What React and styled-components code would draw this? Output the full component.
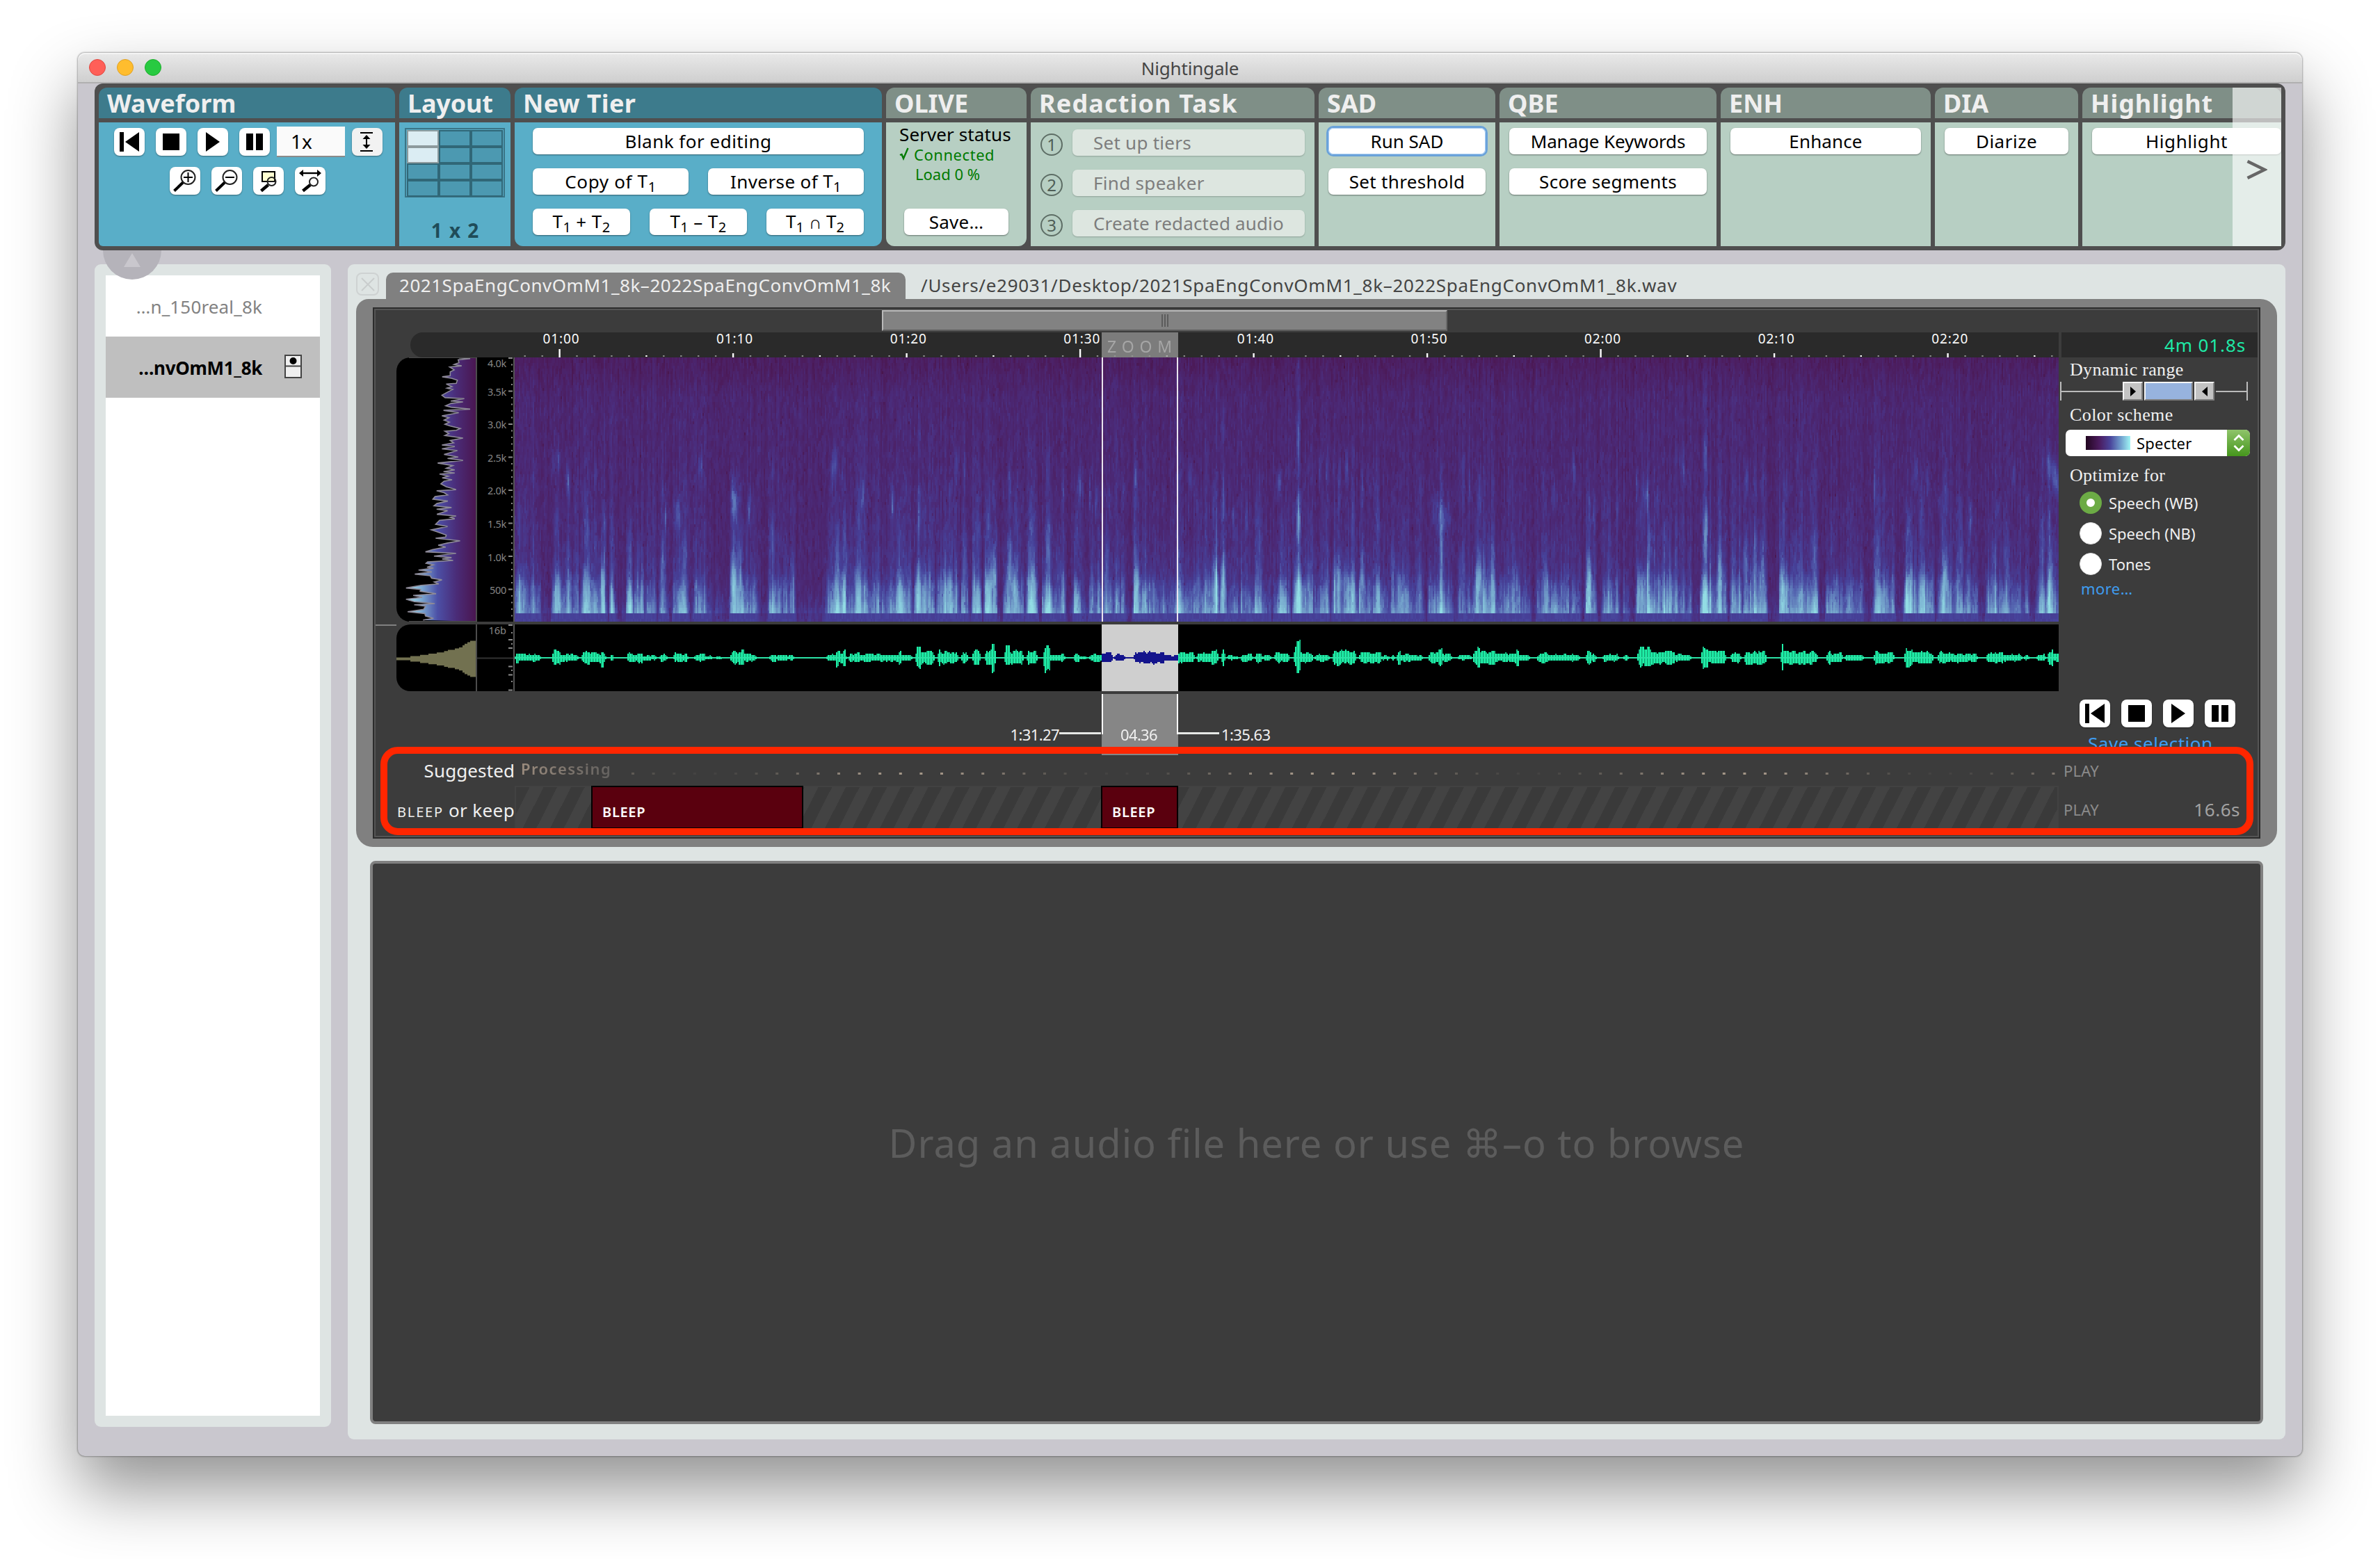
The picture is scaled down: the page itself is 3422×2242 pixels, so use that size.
import React, { useEffect, useRef } from "react";
import styled, { createGlobalStyle, css } from "styled-components";

const Global = createGlobalStyle`
  *, *::before, *::after { box-sizing: border-box; }
  html, body { margin: 0; padding: 0; background: #fff; }
  body { font-family: "Noto Sans", "Open Sans", sans-serif; font-size: 26px; color: #000; overflow: hidden; }
  button { font: inherit; color: inherit; }
`;

/* ---------- shell ---------- */

const Desktop = styled.div`
  width: 3422px;
  height: 2242px;
  padding: 76px 112px 0;
  background: #fff;
  overflow: hidden;
`;

const Window = styled.div`
  width: 3198px;
  height: 2018px;
  display: flex;
  flex-direction: column;
  border-radius: 10px;
  background: #c9c7ce;
  box-shadow: 0 0 2px 1px rgba(0, 0, 0, 0.3), 0 48px 96px rgba(0, 0, 0, 0.43);
`;

const TitleBar = styled.header`
  flex: none;
  height: 44px;
  display: grid;
  grid-template-columns: 1fr auto 1fr;
  align-items: center;
  padding: 0 16px;
  border-radius: 10px 10px 0 0;
  border-bottom: 2px solid #b0b0b0;
  background: linear-gradient(#e9e9e9, #cfcfcf);
  box-shadow: inset 0 2px 0 #f4f4f4;
  color: #464646;
`;

const Lights = styled.div`
  display: flex;
  gap: 16px;
`;

const Light = styled.span`
  width: 24px;
  height: 24px;
  border-radius: 50%;
  background: ${(p) => p.$fill};
  border: 1px solid ${(p) => p.$edge};
`;

const Title = styled.div`
  padding-top: 2px;
  letter-spacing: -0.007em;
`;

/* ---------- toolbar ---------- */

const ToolbarWrap = styled.div`
  position: relative;
  flex: none;
  margin: 0 24px;
`;

const Toolbar = styled.div`
  position: relative;
  z-index: 1;
  height: 240px;
  display: flex;
  gap: 6px;
  padding: 6px;
  border-radius: 12px;
  background: #4f4f4f;
`;

const CollapseHandle = styled.div`
  position: absolute;
  z-index: 2;
  left: 12px;
  top: 240px;
  width: 84px;
  height: 42px;
  border-radius: 0 0 42px 42px;
  background: #b5b3ba;
  display: flex;
  justify-content: center;
  padding-top: 4px;
`;

const Group = styled.section`
  flex: none;
  width: ${(p) => p.$w}px;
  display: flex;
  flex-direction: column;
  gap: 6px;
`;

const GroupTitle = styled.h2`
  margin: 0;
  height: 44px;
  padding: 2px 0 0 12px;
  display: flex;
  align-items: center;
  border-radius: 12px 12px 0 0;
  background: ${(p) => (p.$green ? "#7f8f87" : "#3d7b8c")};
  color: #efefef;
  font-size: 36px;
  line-height: 42px;
  font-weight: 700;
  letter-spacing: ${(p) => p.$ls || 0}em;
  white-space: nowrap;
`;

const GroupBody = styled.div`
  flex: 1;
  min-height: 0;
  display: flex;
  flex-direction: column;
  gap: ${(p) => (p.$gap === undefined ? 20 : p.$gap)}px;
  padding: ${(p) => p.$pad || "8px 14px"};
  border-radius: ${(p) => p.$radius || 0};
  background: ${(p) => (p.$green ? "#b7cfc3" : "#59aec8")};
`;

const ButtonRow = styled.div`
  display: flex;
  gap: 28px;
  align-items: center;
`;

const Button = styled.button`
  flex: ${(p) => (p.$w ? "none" : 1)};
  width: ${(p) => (p.$w ? `${p.$w}px` : "auto")};
  height: 38px;
  padding: 0;
  display: flex;
  justify-content: center;
  align-items: center;
  border: 0;
  border-radius: 7px;
  background: #fff;
  box-shadow: 0 1px 2px rgba(0, 0, 0, 0.45);
  font-size: 26px;
  line-height: 36px;
  letter-spacing: ${(p) => p.$ls || 0}em;
  white-space: pre;
  ${(p) => p.$focus && css`
    box-shadow: 0 0 0 3px #6aa2da, inset 0 0 0 1px #a9cdf2;
  `}
  ${(p) => p.$off && css`
    justify-content: flex-start;
    padding-left: 30px;
    background: #dde6e0;
    color: #7d7d7d;
    box-shadow: 0 1px 2px rgba(0, 0, 0, 0.22);
  `}
`;

const Sub = styled.span`
  font-size: 20px;
  position: relative;
  top: 6px;
`;

const IconButton = styled.button`
  width: 44px;
  height: 40px;
  padding: 0;
  border: 0;
  border-radius: 8px;
  background: ${(p) => p.$bg || "#fff"};
  box-shadow: 0 1px 2px rgba(0, 0, 0, 0.4);
  display: flex;
  svg { display: block; }
`;

const Transport = styled.div`
  display: flex;
  align-items: center;
  gap: 16px;
  margin: ${(p) => p.$top || 0}px 0 0 ${(p) => p.$left || 0}px;
`;

const SpeedBox = styled.div`
  width: 98px;
  height: 44px;
  margin: -2px -6px;
  padding-left: 20px;
  display: flex;
  align-items: center;
  background: #fafafa;
  border-bottom: 2px solid #8a8a8a;
  font-size: 28px;
  line-height: 40px;
`;

const LayoutGrid = styled.div`
  width: 144px;
  height: 100px;
  padding: 1px;
  border: 2px solid #3a7486;
  display: grid;
  grid-template-columns: repeat(3, 46px);
  grid-template-rows: repeat(4, 24px);
`;

const LayoutCell = styled.span`
  border: 2px solid ${(p) => (p.$on ? "#8c9a9d" : "#306777")};
  background: ${(p) => (p.$on ? "#dbedf3" : "#4c99b1")};
`;

const LayoutLabel = styled.div`
  margin-top: 27px;
  text-align: center;
  font-size: 28px;
  line-height: 40px;
  font-weight: 700;
  word-spacing: 0.1em;
  color: #1f4c59;
`;

const StatusTitle = styled.div`
  font-size: 26px;
  line-height: 30px;
  padding-left: 13px;
  letter-spacing: 0.004em;
  white-space: nowrap;
`;

const StatusLine = styled.div`
  display: flex;
  align-items: center;
  gap: 6px;
  height: 28px;
  padding-left: ${(p) => p.$left}px;
  font-size: 22px;
  letter-spacing: ${(p) => p.$ls}em;
  color: #007a00;
  white-space: nowrap;
`;

const StatusAction = styled.div`
  margin: 36px 0 0 20px;
  display: flex;
`;

const ScrollHint = styled.div`
  position: absolute;
  right: 6px;
  top: 6px;
  width: 70px;
  height: 228px;
  padding-top: 8px;
  background: rgba(255, 255, 255, 0.63);
  display: flex;
  align-items: center;
  justify-content: center;
`;

const StepRow = styled.div`
  height: 38px;
  display: flex;
  align-items: center;
  gap: 14px;
  svg { flex: none; margin-top: 6px; }
`;

/* ---------- body ---------- */

const Body = styled.main`
  flex: 1;
  min-height: 0;
  display: flex;
  align-items: flex-start;
  gap: 24px;
  padding: 20px 24px 0;
`;

const Sidebar = styled.aside`
  flex: none;
  width: 340px;
  height: 1672px;
  padding: 16px;
  border-radius: 9px;
  background: #dee4e3;
`;

const FileList = styled.ul`
  height: 100%;
  margin: 0;
  padding: 0;
  list-style: none;
  background: #fff;
`;

const FileItem = styled.li`
  height: 88px;
  padding: 2px 26px 0 0;
  display: grid;
  grid-template-columns: 225px 1fr;
  align-items: center;
  text-align: right;
  background: ${(p) => (p.$active ? "#bfbfbf" : "#fff")};
  color: ${(p) => (p.$active ? "#000" : "#828282")};
  font-weight: ${(p) => (p.$active ? 700 : 400)};
  letter-spacing: ${(p) => (p.$active ? -0.012 : 0.006)}em;
  svg { justify-self: end; margin-top: -4px; }
`;

const Workspace = styled.div`
  flex: 1;
  height: 1690px;
  padding: 12px 12px 0;
  border-radius: 9px;
  background: #dee4e3;
`;

const TabBar = styled.div`
  height: 38px;
  display: flex;
  align-items: flex-start;
`;

const CloseTab = styled.span`
  width: 33px;
  height: 33px;
  border: 2px solid #ced2d2;
  border-radius: 8px;
  display: flex;
  align-items: center;
  justify-content: center;
`;

const Tab = styled.div`
  width: 747px;
  height: 38px;
  margin-left: 10px;
  padding-left: 19px;
  border-radius: 10px 10px 0 0;
  background: #808080;
  color: #efefef;
  line-height: 36px;
  letter-spacing: 0.0205em;
  white-space: nowrap;
`;

const FilePath = styled.div`
  margin-left: 22px;
  line-height: 36px;
  letter-spacing: 0.0277em;
  color: #444;
  white-space: nowrap;
`;

const AudioFrame = styled.section`
  width: 2762px;
  height: 788px;
  padding: 12px 24px;
  border-radius: 24px;
  border-top-left-radius: 18px;
  background: #808080;
`;

const AudioPane = styled.div`
  position: relative;
  height: 764px;
  border: 2px solid #2c2c2c;
  background: #3c3c3c;
  box-shadow: inset 0 0 0 2px #555;
`;

const OverviewTrack = styled.div`
  height: 34px;
  padding: 2px 0 0 730px;
`;

const OverviewThumb = styled.div`
  width: 813px;
  height: 30px;
  display: flex;
  justify-content: center;
  align-items: center;
  gap: 2px;
  border: 2px solid;
  border-color: #b9b9b9 #6a6a6a #5c5c5c #b9b9b9;
  background: #828282;
`;

const Grip = styled.i`
  width: 2px;
  height: 18px;
  background: #5c5c5c;
`;

const Plots = styled.div`
  height: 600px;
  display: grid;
  grid-template-columns: 2422px 284px;
  column-gap: 2px;
`;

const PlotColumn = styled.div`
  position: relative;
  display: flex;
  flex-direction: column;
`;

const Ruler = styled.div`
  height: 36px;
  margin-left: 52px;
  border-radius: 18px 0 0 18px;
  background: #2a2a2a;
  svg { display: block; overflow: visible; }
`;

const PlotRow = styled.div`
  height: ${(p) => p.$h}px;
  margin: 0 0 4px 32px;
  display: flex;
  border-radius: 20px 0 0 20px;
  background: #000;
  svg, canvas { display: block; flex: none; overflow: visible; }
`;

const SpectrumCanvas = styled.canvas`
  width: 2220px;
  height: 380px;
  image-rendering: pixelated;
`;

const Selection = styled.div`
  position: absolute;
  z-index: 1;
  left: 1046px;
  top: 0;
  width: 110px;
  display: flex;
  flex-direction: column;
`;

const ZoomLabel = styled.div`
  height: 36px;
  padding: 6px 0 0 8px;
  background: rgba(150, 150, 150, 0.76);
  color: #a6a6a6;
  font-size: 23px;
  line-height: 28px;
  letter-spacing: 0.34em;
  white-space: nowrap;
`;

const SelectionEdges = styled.div`
  height: 380px;
  border: solid #e9e4ee;
  border-width: 0 2px;
`;

const SelectionFoot = styled.div`
  height: 88px;
  margin-top: 104px;
  padding: 43px 3px 0 0;
  background: #868686;
  border: solid transparent;
  border-width: 0 2px;
  border-image: linear-gradient(#fff 58px, #868686 58px) 1;
  text-align: center;
  font-size: 22px;
  line-height: 30px;
  letter-spacing: -0.03em;
  color: #f0f0f0;
`;

const Bounds = styled.div`
  position: absolute;
  left: 0;
  top: 563px;
  width: 1420px;
  height: 30px;
  display: flex;
  align-items: center;
  font-size: 22px;
  letter-spacing: -0.027em;
  color: #f0f0f0;
`;

const BoundStart = styled.span`
  width: 985px;
  text-align: right;
`;

const BoundEnd = styled.span`
  padding-left: 3px;
`;

const Leader = styled.i`
  width: 60px;
  height: 3px;
  margin: -4px ${(p) => p.$gap || 0}px 0 0;
  background: #e6e8e6;
`;

/* ---------- settings column ---------- */

const Settings = styled.div`
  height: 600px;
  padding-left: 2px;
  overflow: hidden;
`;

const Duration = styled.div`
  height: 36px;
  padding-right: 17px;
  background: #2a2a2a;
  color: #1fe9a6;
  text-align: right;
  line-height: 36px;
  letter-spacing: 0.034em;
`;

const SerifLabel = styled.div`
  height: 34px;
  margin-top: ${(p) => p.$top}px;
  padding-left: 12px;
  font-family: "Liberation Serif", "Times New Roman", serif;
  font-size: 26px;
  line-height: 34px;
  letter-spacing: ${(p) => p.$ls || 0}em;
  color: #f0f0f0;
`;

const RangeSlider = styled.div`
  height: 27px;
  width: 272px;
  margin-left: -2px;
  display: flex;
  align-items: center;
`;

const Rail = styled.i`
  width: ${(p) => p.$w}px;
  height: 100%;
  border: 0 solid #bbb;
  border-left-width: ${(p) => (p.$start ? 2 : 0)}px;
  border-right-width: ${(p) => (p.$end ? 2 : 0)}px;
  background: linear-gradient(#bbb, #bbb) center / 100% 2px no-repeat;
`;

const Knob = styled.i`
  width: ${(p) => (p.$range ? 70 : 29)}px;
  height: 27px;
  margin-right: 2px;
  display: flex;
  justify-content: center;
  align-items: center;
  border: 2px solid;
  border-color: #f4f4f4 #7f7f7f #7f7f7f #f4f4f4;
  background: ${(p) => (p.$range ? "#97b3de" : "#c3c3c3")};
`;

const Combo = styled.div`
  width: 265px;
  height: 38px;
  margin: 4px 0 0 6px;
  display: flex;
  align-items: center;
  border-radius: 7px;
  background: #fff;
  overflow: hidden;
  font-size: 22px;
  line-height: 36px;
  letter-spacing: 0.01em;
`;

const Swatch = styled.i`
  width: 64px;
  height: 20px;
  margin: 0 9px 0 29px;
  background: linear-gradient(90deg, #22061f, #4b1b5e 30%, #4a459b 55%, #6f9ccc 78%, #9ff5f5);
`;

const ComboArrows = styled.span`
  margin-left: auto;
  width: 33px;
  height: 38px;
  background: linear-gradient(#8fc46a, #45961c);
  display: flex;
  align-items: center;
  justify-content: center;
`;

const Radio = styled.div`
  height: 44px;
  padding-left: 26px;
  display: flex;
  align-items: center;
  gap: 10px;
  font-size: 22px;
  color: #f0f0f0;
  white-space: nowrap;
`;

const Dot = styled.i`
  width: 32px;
  height: 32px;
  border-radius: 50%;
  border: ${(p) => (p.$on ? "10.5px solid #6cab45" : "1px solid #ddd")};
  background: #fff;
`;

const LinkText = styled.div`
  margin: ${(p) => p.$m};
  font-size: ${(p) => p.$size}px;
  line-height: 30px;
  letter-spacing: 0.02em;
  color: #3f9cf0;
  white-space: nowrap;
`;

/* ---------- tiers ---------- */

const Tier = styled.div`
  height: ${(p) => p.$h}px;
  display: grid;
  grid-template-columns: 202px 2220px 1fr;
`;

const TierName = styled.div`
  padding-top: ${(p) => p.$top}px;
  text-align: right;
  line-height: 36px;
  letter-spacing: ${(p) => p.$ls || 0}em;
  color: #f0f0f0;
  white-space: nowrap;
  small { font-size: 20px; letter-spacing: 0.09em; }
`;

const ProcessingLane = styled.div`
  display: flex;
  align-items: flex-start;
  padding: 9px 0 0 9px;
  svg { display: block; flex: none; margin-top: 24px; }
`;

const ProcessingText = styled.span`
  width: 160px;
  font-size: 22px;
  line-height: 36px;
  font-weight: 600;
  letter-spacing: 0.065em;
  background: linear-gradient(90deg, #9a8b7d, #62605e 132px);
  background-clip: text;
  -webkit-background-clip: text;
  color: transparent;
`;

const HatchLane = styled.div`
  display: flex;
  height: 62px;
  border: 2px solid #424242;
  border-width: 2px 2px 0;
  background: repeating-linear-gradient(117deg, #3a3a3a 0 17.6px, #434343 17.6px 35.2px);
`;

const Bleep = styled.div`
  flex: none;
  width: ${(p) => p.$w}px;
  height: 62px;
  margin: -2px 0 0 ${(p) => p.$left}px;
  padding: 18px 0 0 14px;
  border: 2px solid #000;
  background: #5a000e;
  color: #fff;
  font-size: 20px;
  line-height: 36px;
  font-weight: 600;
  letter-spacing: 0.035em;
`;

const TierTail = styled.div`
  padding: ${(p) => p.$top}px 27px 0 7px;
  display: flex;
  justify-content: space-between;
  line-height: 36px;
  color: #a3a3a3;
  letter-spacing: 0.02em;
  small { font-size: 22px; color: #8b8b8b; letter-spacing: 0.01em; }
`;

const Callout = styled.div`
  position: absolute;
  z-index: 3;
  left: 9px;
  top: 630px;
  width: 2693px;
  height: 127px;
  border: 10px solid #ff2600;
  border-radius: 25px;
`;

const DropZone = styled.section`
  width: 2722px;
  height: 810px;
  margin: 20px 0 0 20px;
  display: flex;
  align-items: center;
  justify-content: center;
  border: 4px solid #808080;
  border-radius: 8px;
  background: #3c3c3c;
  color: #5c5c5c;
  font-size: 56px;
  letter-spacing: 0.0175em;
  white-space: nowrap;
`;

/* ---------- signal data ---------- */

const BURSTS = [
  [740, 743, 2], [743, 747, 8.5], [747, 779, 5.5], [795, 806, 11], [806, 832, 6], [836, 848, 10], [848, 865, 7], [865, 868, 13],
  [868, 873, 6], [878, 883, 10], [902, 905, 12], [905, 925, 7], [925, 944, 4], [948, 960, 5], [968, 973, 9], [973, 990, 6],
  [998, 1015, 6], [1015, 1024, 3], [1028, 1040, 1.5], [1050, 1062, 9], [1062, 1071, 11], [1071, 1088, 5.5], [1107, 1116, 6],
  [1116, 1119, 2], [1119, 1132, 5], [1132, 1136, 3], [1136, 1143, 5], [1189, 1203, 5], [1203, 1206, 13], [1206, 1213, 9],
  [1213, 1216, 13], [1216, 1219, 4], [1220, 1228, 7], [1228, 1236, 8], [1236, 1269, 6], [1269, 1292, 5], [1292, 1296, 9],
  [1296, 1312, 5], [1317, 1325, 16], [1325, 1345, 9], [1348, 1353, 15], [1353, 1378, 9], [1383, 1393, 8], [1399, 1410, 12],
  [1417, 1427, 12], [1427, 1432, 23], [1445, 1453, 17], [1453, 1473, 10], [1477, 1492, 9], [1500, 1510, 21], [1510, 1532, 5],
  [1544, 1552, 7], [1552, 1562, 3], [1567, 1585, 6], [1585, 1600, 8], [1603, 1618, 5], [1631, 1675, 8.5], [1675, 1694, 4],
  [1694, 1718, 8], [1720, 1742, 7], [1742, 1753, 12], [1756, 1763, 14], [1764, 1781, 3], [1784, 1802, 6], [1805, 1815, 8],
  [1815, 1828, 3], [1833, 1855, 7], [1860, 1865, 15], [1865, 1870, 25], [1870, 1889, 8], [1891, 1912, 6], [1917, 1930, 12],
  [1930, 1950, 10], [1954, 1986, 8], [1986, 1998, 3], [2000, 2007, 5], [2009, 2015, 13], [2015, 2029, 6], [2029, 2047, 4],
  [2055, 2069, 8], [2069, 2075, 14], [2075, 2089, 6], [2096, 2116, 4], [2119, 2125, 13], [2125, 2128, 18], [2128, 2150, 10],
  [2151, 2180, 7], [2181, 2184, 13], [2184, 2200, 4], [2211, 2227, 8], [2227, 2272, 5], [2281, 2288, 10], [2288, 2297, 5],
  [2304, 2328, 5], [2334, 2343, 4], [2354, 2369, 14], [2369, 2374, 16], [2374, 2408, 10], [2408, 2432, 5], [2446, 2457, 17],
  [2457, 2482, 10], [2489, 2504, 8], [2508, 2540, 10], [2561, 2565, 19], [2565, 2583, 10], [2583, 2615, 9], [2626, 2633, 10],
  [2633, 2650, 7], [2652, 2681, 5], [2695, 2710, 9], [2710, 2725, 8], [2739, 2751, 14], [2751, 2781, 9], [2787, 2804, 9],
  [2804, 2845, 7], [2856, 2880, 8], [2880, 2908, 5], [2910, 2918, 4], [2929, 2943, 5], [2945, 2952, 12], [2952, 2960, 6],
];

/* x position, reach above the floor (0..1) and strength of the tall bright streaks */
const STREAKS = [
  [746, 0.55, 0.3], [755, 0.45, 0.25], [801, 0.4, 0.5], [817, 0.3, 0.3], [843, 0.62, 0.3], [856, 0.5, 0.3], [867, 0.35, 0.45],
  [881, 0.3, 0.35], [905, 0.3, 0.55], [920, 0.28, 0.3], [953, 0.7, 0.35], [985, 0.6, 0.3], [1054, 0.6, 0.5], [1065, 0.45, 0.5],
  [1085, 0.5, 0.25], [1111, 0.62, 0.45], [1139, 0.38, 0.3], [1204, 0.35, 0.4], [1215, 0.4, 0.45], [1234, 0.55, 0.3],
  [1295, 0.3, 0.4], [1321, 0.85, 0.5], [1330, 0.5, 0.3], [1364, 0.4, 0.35], [1387, 0.7, 0.35], [1406, 0.55, 0.45],
  [1421, 0.5, 0.3], [1429, 0.55, 0.5], [1452, 0.6, 0.55], [1460, 0.6, 0.4], [1482, 0.5, 0.3], [1507, 0.6, 0.6], [1522, 0.4, 0.3],
  [1548, 0.45, 0.45], [1591, 0.45, 0.35], [1634, 0.3, 0.3], [1695, 0.3, 0.35], [1746, 0.65, 0.45], [1759, 0.8, 0.5],
  [1777, 0.4, 0.25], [1810, 0.5, 0.35], [1843, 0.4, 0.4], [1867, 0.95, 0.75], [1881, 0.4, 0.3], [1925, 0.6, 0.4],
  [1945, 0.5, 0.35], [1958, 0.75, 0.4], [1981, 0.6, 0.35], [2003, 0.35, 0.35], [2018, 0.4, 0.3], [2042, 0.85, 0.2],
  [2072, 0.55, 0.5], [2103, 0.6, 0.3], [2127, 0.6, 0.55], [2145, 0.35, 0.35], [2220, 0.6, 0.2], [2236, 0.3, 0.3], [2285, 0.45, 0.5],
  [2359, 0.7, 0.3], [2372, 0.4, 0.5], [2396, 0.35, 0.35], [2452, 0.85, 0.65], [2473, 0.45, 0.4], [2510, 0.5, 0.45],
  [2524, 0.5, 0.35], [2534, 0.6, 0.45], [2565, 0.4, 0.45], [2581, 0.35, 0.3], [2608, 0.6, 0.4], [2634, 0.35, 0.3],
  [2697, 0.8, 0.25], [2708, 0.55, 0.25], [2743, 0.45, 0.5], [2763, 0.55, 0.35], [2798, 0.65, 0.45], [2820, 0.4, 0.35],
  [2866, 0.3, 0.35], [2884, 0.4, 0.3], [2937, 0.6, 0.35], [2948, 0.4, 0.5],
];

const COLUMNS = 1110;
const ROWS = 95;

const rand = (a, b = 0) => {
  const s = Math.sin(a * 127.1 + b * 311.7) * 43758.5453;
  return s - Math.floor(s);
};

const smooth = (x, seed) => {
  const i = Math.floor(x);
  const t = x - i;
  const k = t * t * (3 - 2 * t);
  return rand(i, seed) * (1 - k) + rand(i + 1, seed) * k;
};

const ENVELOPE = Array.from({ length: COLUMNS }, (_, i) => {
  const x = 740 + i * 2 + 1;
  const hit = BURSTS.find(([a, b]) => x >= a && x < b);
  return hit ? hit[2] : 0;
});

const RAMP = [
  [0, 70, 16, 62], [0.16, 76, 28, 92], [0.32, 75, 42, 120], [0.48, 70, 64, 152],
  [0.62, 84, 100, 176], [0.8, 112, 156, 200], [1, 146, 220, 228],
];

const shade = (v) => {
  const c = Math.max(0, Math.min(1, v));
  for (let i = 1; i < RAMP.length; i += 1) {
    if (c <= RAMP[i][0]) {
      const [a, ...p] = RAMP[i - 1];
      const [b, ...q] = RAMP[i];
      const t = (c - a) / (b - a);
      return p.map((n, k) => n + (q[k] - n) * t);
    }
  }
  return RAMP[RAMP.length - 1].slice(1);
};

function Spectrogram() {
  const ref = useRef(null);
  useEffect(() => {
    const ctx = ref.current.getContext("2d");
    const img = ctx.createImageData(COLUMNS, ROWS);
    for (let x = 0; x < COLUMNS; x += 1) {
      const px = 741 + x * 2;
      const near = (ENVELOPE[x] * 2 + (ENVELOPE[x - 1] || 0) + (ENVELOPE[x + 1] || 0)) / 4;
      const s = Math.min(1, near / 14);
      const voiced = Math.min(1, near / 5);
      const streak = Math.pow(smooth(x / 1.6, 5), 3);
      const reach = 0.12 + 0.3 * s * smooth(x / 4, 9);
      const cut = 0.1 + 0.05 * s + 0.06 * smooth(x / 2, 3);
      const colNoise = (rand(x, 77) - 0.5) * 0.07;
      const formant = 0.36 + 0.26 * smooth(x / 11, 21);
      const fAmp = voiced * Math.pow(smooth(x / 2.4, 31), 5) * 0.32;
      const near2 = STREAKS.filter(([c]) => Math.abs(c - px) < 12);
      for (let y = 0; y < ROWS; y += 1) {
        const h = 1 - y / ROWS;
        let v = 0.27 - 0.1 * Math.max(0, h - 0.85) * 6 + colNoise;
        v += (rand(x, Math.floor((y + (x % 3)) / 3) + 200) - 0.5) * 0.1;
        if (rand(x, y + 900) > 0.995) v -= 0.1;
        v += 0.05 * Math.exp(-h / 0.25);
        v += 0.13 / (1 + Math.exp((h - 0.06) / 0.02));
        v += voiced * (0.13 + 0.13 * s + 0.1 * (rand(x, 41) - 0.5) + 0.1 * (smooth(x / 3, 43) - 0.5)) / (1 + Math.exp((h - cut) / 0.02));
        v += voiced * (0.08 + 0.24 * s) * streak * Math.exp(-Math.pow(h / reach, 1.6));
        v += voiced * 0.08 * Math.exp(-Math.pow(h / 0.4, 2));
        v += voiced * 0.12 * Math.pow(streak, 0.7) * (1 - h * 0.75);
        v += fAmp * Math.exp(-Math.pow((h - formant) / 0.06, 2));
        near2.forEach(([c, tall, power], k) => {
          const d = Math.abs(px - c + (h - 0.2) * 5 * (rand(c, 8) - 0.5));
          const fall = h < tall ? 1 - 0.65 * (h / tall) : 0.35 * Math.exp(-(h - tall) / 0.08);
          const band = 0.65 + 0.35 * Math.cos(h * 21 + rand(c, k) * 6);
          v += power * 0.75 * fall * band * Math.exp(-Math.pow(d / (5 - 2.6 * Math.min(1, h / 0.5)), 2));
        });
        if (h < 0.04) v = Math.min(v, 0.55) - 0.07;
        v += (rand(x, Math.floor(y / 2) + 400) - 0.5) * 0.05;
        const [r, g, b] = shade(v > 0.8 ? 0.8 + (v - 0.8) * 0.6 : v);
        const o = (y * COLUMNS + x) * 4;
        img.data[o] = r;
        img.data[o + 1] = g;
        img.data[o + 2] = b;
        img.data[o + 3] = 255;
      }
    }
    ctx.putImageData(img, 0, 0);
  }, []);
  return <SpectrumCanvas ref={ref} width={COLUMNS} height={ROWS} />;
}

const wavePath = () => {
  const mid = 48;
  let top = `M0 ${mid}`;
  let bottom = "";
  ENVELOPE.forEach((a, i) => {
    const edge = ENVELOPE[i - 1] === 0 || ENVELOPE[i + 1] === 0 ? 0.5 : 1;
    const up = Math.max(1, Math.round((a * edge * (0.62 + 0.5 * smooth(i / 1.7, 61))) / 2) * 2);
    const down = Math.max(1, Math.round((a * edge * (0.6 + 0.5 * smooth(i / 1.7, 62))) / 2) * 2);
    top += `V${mid - up}H${(i + 1) * 2}`;
    bottom = `V${mid + down}H${i * 2}${bottom}`;
  });
  return `${top}${bottom}Z`;
};

const WAVE = wavePath();

function Waveform() {
  return (
    <svg width="2220" height="96" viewBox="0 0 2220 96">
      <defs>
        <pattern id="bars" width="4" height="96" patternUnits="userSpaceOnUse">
          <rect width="4" height="96" fill="#1ff0a8" />
          <rect width="1.4" height="96" fill="#12a473" />
        </pattern>
        <clipPath id="sel"><rect x="844" width="110" height="96" /></clipPath>
      </defs>
      <path d={WAVE} fill="url(#bars)" />
      <path d="M0 48H2220" stroke="#2be3a6" strokeWidth="2" />
      <g clipPath="url(#sel)">
        <rect x="844" width="110" height="96" fill="#cfcfcf" />
        <path d={WAVE} fill="#14148c" />
      </g>
    </svg>
  );
}

const PROFILE = [
  [102, 418], [105, 460], [110, 415], [122, 418], [130, 400], [135, 428], [140, 383], [152, 400], [160, 385], [176, 385], [181, 355],
  [187, 390], [195, 412], [208, 408], [211, 370], [222, 392], [228, 373], [234, 394], [245, 375], [258, 354], [268, 366], [272, 438],
  [282, 387], [286, 433], [292, 388], [302, 368], [308, 388], [316, 460], [321, 360], [331, 417], [344, 354], [352, 380], [362, 362],
  [370, 382], [379, 365], [386, 384], [397, 423], [404, 408], [408, 365], [418, 380], [426, 365], [437, 433], [447, 385], [457, 398],
  [466, 354], [472, 402], [482, 354], [489, 412], [505, 362], [516, 415], [522, 375], [530, 433], [541, 338], [552, 395], [563, 370],
  [570, 402], [577, 360], [583, 402], [587, 345], [596, 378], [603, 355], [611, 392], [617, 362], [628, 350], [640, 370], [652, 407],
  [657, 334], [665, 362], [674, 375], [681, 328], [692, 320], [700, 376], [710, 335], [720, 324], [727, 390], [734, 334], [740, 375],
  [755, 335], [762, 407], [768, 385], [774, 402], [780, 345], [797, 330], [806, 375], [820, 314], [832, 345], [842, 370], [850, 368],
  [855, 330], [866, 422], [875, 375], [884, 340], [892, 368], [902, 320], [912, 292], [918, 407], [930, 324], [936, 390], [942, 355],
  [948, 396], [954, 300], [960, 294], [966, 322], [976, 298], [980, 322], [988, 266], [996, 316], [1005, 252], [1012, 310],
  [1022, 315], [1029, 354], [1038, 325], [1046, 342], [1052, 275], [1063, 219], [1069, 274], [1077, 272], [1087, 332], [1094, 246],
  [1102, 280], [1110, 219], [1120, 250], [1128, 327], [1133, 250], [1139, 292], [1152, 285], [1162, 225], [1170, 290], [1180, 292],
  [1190, 322], [1197, 283],
].map(([y, x]) => [(x - 183) / 2.613, (y - 100) / 2.904]);

const PROFILE_LINE = PROFILE.map(([x, y]) => `${x.toFixed(1)} ${y.toFixed(1)}`).join("L");

function SpectrumProfile() {
  return (
    <svg width="114" height="380" viewBox="0 0 114 380">
      <defs>
        <linearGradient id="heat" gradientUnits="userSpaceOnUse" x1="14" x2="114" y1="0" y2="0">
          <stop offset="0" stopColor="#a8e6ec" />
          <stop offset="0.22" stopColor="#7ba9d2" />
          <stop offset="0.45" stopColor="#4c50a6" />
          <stop offset="0.72" stopColor="#4a2c78" />
          <stop offset="1" stopColor="#4a1650" />
        </linearGradient>
      </defs>
      <path d={`M114 0L${PROFILE_LINE}L114 380Z`} fill="url(#heat)" />
      <path d={`M${PROFILE_LINE}`} fill="none" stroke="#8e8a98" strokeWidth="1.6" />
      <path d="M18 .5H114M18 379.5H114" stroke="#4a4a4a" />
      <path d="M-30 385H0" stroke="#808080" strokeWidth="2" />
    </svg>
  );
}

const FREQS = ["4.0k", "3.5k", "3.0k", "2.5k", "2.0k", "1.5k", "1.0k", "500"];

function FrequencyAxis() {
  return (
    <svg width="56" height="380" viewBox="0 0 56 380" fontFamily="Noto Sans, sans-serif">
      <path d="M1 0V380" stroke="#4c4c4c" strokeWidth="2" />
      <path d="M55 0V380" stroke="#555" strokeWidth="2" />
      {Array.from({ length: 40 }, (_, i) => (
        <path key={i} d={i % 5 === 0 ? `M47 ${i * 9.5 + 1}h6` : `M51 ${i * 9.5 + 1}h2`} stroke="#8b8b8b" strokeWidth="2" />
      ))}
      {FREQS.map((f, i) => (
        <text key={f} x="44" y={i === 0 ? 14 : i * 47.6 + 7} textAnchor="end" fontSize="14.5" letterSpacing="-0.3" fill="#868686">{f}</text>
      ))}
    </svg>
  );
}

const STEPS = [[0, 2], [20, 4], [34, 5.8], [46, 7.6], [58, 9.4], [68.5, 11.4], [74, 13], [84, 15], [90, 16.6], [95, 19.6], [98, 21.8], [102, 24], [106, 26]];

function LevelProfile() {
  const up = STEPS.map(([x, h], i) => `${i ? "H" + x : "M" + x + " 49.6"}V${49.6 - h}`).join("");
  const down = [...STEPS].reverse().map(([x, h]) => `V${49.6 + h}H${x}`).join("");
  return (
    <svg width="114" height="96" viewBox="0 0 114 96">
      <path d={`${up}H114${down}Z`} fill="#727150" />
    </svg>
  );
}

function LevelAxis() {
  return (
    <svg width="56" height="96" viewBox="0 0 56 96" fontFamily="Noto Sans, sans-serif">
      <path d="M1 0V96" stroke="#4c4c4c" strokeWidth="2" />
      <path d="M2 48.5H54" stroke="#333" strokeWidth="2" />
      <path d="M55 0V96" stroke="#555" strokeWidth="2" />
      <path d="M47 1h6M47 22h6M47 34h6M47 60.5h6M47 72.5h6M47 94.5h6M51 12h2M51 28h2M51 66h2M51 82h2" stroke="#8b8b8b" strokeWidth="2" />
      <text x="44" y="14" textAnchor="end" fontSize="14.5" fill="#868686">16b</text>
    </svg>
  );
}

const TIMES = ["01:00", "01:10", "01:20", "01:30", "01:40", "01:50", "02:00", "02:10", "02:20"];

function TimeRuler() {
  const ticks = [];
  for (let s = -2; s <= 86; s += 1) {
    const x = 214.6 + s * 24.95;
    const len = s % 30 === 0 ? 12 : s % 10 === 0 ? 6 : 3;
    ticks.push(<path key={s} d={`M${x.toFixed(1)} ${36 - len}V${len === 3 ? 35 : 36}`} stroke={s % 5 === 0 ? "#fff" : "#8b8b8b"} strokeWidth="2.4" />);
  }
  return (
    <svg width="2370" height="36" viewBox="0 0 2370 36" fontFamily="Noto Sans, sans-serif">
      {ticks}
      {TIMES.map((t, i) => (
        <text key={t} x={217 + i * 249.6} y="16" textAnchor="middle" fontSize="19" letterSpacing="0.9" fill="#fafafa">{t}</text>
      ))}
    </svg>
  );
}

function ProcessingDots() {
  return (
    <svg width="2052" height="4" viewBox="0 0 2052 4">
      {Array.from({ length: 70 }, (_, i) => {
        const glow = 0.5 + 0.5 * Math.cos(((i - 13.5) / 20) * Math.PI * 2);
        return <rect key={i} x={i * 29.6} width="4" height="3" fill="#a89a8b" opacity={0.08 + 0.9 * glow} />;
      })}
    </svg>
  );
}

/* ---------- icons ---------- */

const GLYPHS = {
  start: <path d="M8 6h6v28H8zM36 6v28L16 20z" />,
  stop: <path d="M10 8h24v24H10z" />,
  play: <path d="M12 6v28l20-14z" />,
  pause: <path d="M10 8h10v24H10zM24 8h10v24H24z" />,
  fit: (
    <g>
      <path d="M12 7h18M12 33h18M21 12v16" fill="none" stroke="#000" strokeWidth="2" />
      <path d="M21 10l5.500 6h-11zM21 30l5.500-6h-11z" />
    </g>
  ),
  zoomIn: (
    <g fill="none" stroke="#222" strokeWidth="2">
      <circle cx="26.5" cy="15" r="10" />
      <path d="M6.5 34.5L19 22.5" strokeWidth="4" stroke="#000" />
      <path d="M20 15h13M26.5 8v14" stroke="#000" />
    </g>
  ),
  zoomOut: (
    <g fill="none" stroke="#222" strokeWidth="2">
      <circle cx="26.5" cy="15" r="10" />
      <path d="M6.5 34.5L19 22.5" strokeWidth="4" stroke="#000" />
      <path d="M20 15h13" stroke="#000" />
    </g>
  ),
  zoomSel: (
    <g fill="none" stroke="#222" strokeWidth="2">
      <path d="M13 7h18v14H13z" fill="#ffffd2" stroke="#000" />
      <circle cx="26.5" cy="21" r="6" />
      <path d="M11.5 34.5L21.5 26" strokeWidth="4.5" stroke="#000" />
      <path d="M20 21h13" strokeWidth="1.5" />
    </g>
  ),
  zoomAll: (
    <g fill="none" stroke="#222" strokeWidth="2">
      <path d="M8 9h28" stroke="#000" strokeWidth="2.4" />
      <path d="M6 9l6-5v10zM38 9l-6-5v10z" fill="#000" stroke="none" />
      <circle cx="27" cy="21.5" r="6" />
      <path d="M11.5 34.5L22 26" strokeWidth="4.5" stroke="#000" />
    </g>
  ),
};

function Tool({ icon, bg }) {
  return (
    <IconButton $bg={bg}>
      <svg width="44" height="40" viewBox="0 0 44 40">{GLYPHS[icon]}</svg>
    </IconButton>
  );
}

function PlaybackTools() {
  return (
    <>
      <Tool icon="start" />
      <Tool icon="stop" />
      <Tool icon="play" />
      <Tool icon="pause" />
    </>
  );
}

function Circled({ n }) {
  return (
    <svg width="32" height="32" viewBox="0 0 32 32">
      <circle cx="16" cy="16" r="15" fill="none" stroke="#5d6d65" strokeWidth="2" />
      <text x="16" y="24.5" textAnchor="middle" fontFamily="Noto Sans, sans-serif" fontSize="24" fill="#4f5e57">{n}</text>
    </svg>
  );
}

function Step({ n, children, ls }) {
  return (
    <StepRow>
      <Circled n={n} />
      <Button $off $ls={ls}>{children}</Button>
    </StepRow>
  );
}

const T = ({ n }) => <span>T<Sub>{n}</Sub></span>;

export default function App() {
  return (
    <Desktop>
      <Global />
      <Window>
        <TitleBar>
          <Lights>
            <Light $fill="#ff5f58" $edge="#e0473f" />
            <Light $fill="#ffbd2e" $edge="#dfa023" />
            <Light $fill="#28ca41" $edge="#1dad2b" />
          </Lights>
          <Title>Nightingale</Title>
          <span />
        </TitleBar>

        <ToolbarWrap>
          <Toolbar>
            <Group $w={426}>
              <GroupTitle>Waveform</GroupTitle>
              <GroupBody $pad="8px 18px 8px 22px" $gap={16} $radius="0 0 0 6px">
                <Transport>
                  <PlaybackTools />
                  <SpeedBox>1x</SpeedBox>
                  <Tool icon="fit" bg="#f2f2f2" />
                </Transport>
                <Transport $left={80}>
                  <Tool icon="zoomIn" />
                  <Tool icon="zoomOut" />
                  <Tool icon="zoomSel" />
                  <Tool icon="zoomAll" />
                </Transport>
              </GroupBody>
            </Group>

            <Group $w={160}>
              <GroupTitle $ls={-0.005}>Layout</GroupTitle>
              <GroupBody $pad="8px 8px 0" $gap={0}>
                <LayoutGrid>
                  {Array.from({ length: 12 }, (_, i) => <LayoutCell key={i} $on={i === 0 || i === 3} />)}
                </LayoutGrid>
                <LayoutLabel>1 x 2</LayoutLabel>
              </GroupBody>
            </Group>

            <Group $w={528}>
              <GroupTitle $ls={0.01}>New Tier</GroupTitle>
              <GroupBody $pad="8px 26px" $radius="0 0 12px 12px">
                <ButtonRow><Button $ls={0.019}>Blank for editing</Button></ButtonRow>
                <ButtonRow>
                  <Button $w={224} $ls={0.025}>Copy of <T n="1" /></Button>
                  <Button $w={224} $ls={0.015}>Inverse of <T n="1" /></Button>
                </ButtonRow>
                <ButtonRow>
                  <Button $w={140} $ls={0.015}><T n="1" /> + <T n="2" /></Button>
                  <Button $w={140} $ls={0.015}><T n="1" /> – <T n="2" /></Button>
                  <Button $w={140}><T n="1" /> ∩ <T n="2" /></Button>
                </ButtonRow>
              </GroupBody>
            </Group>

            <Group $w={202}>
              <GroupTitle $green>OLIVE</GroupTitle>
              <GroupBody $green $pad="2px 0 0 6px" $gap={0} $radius="0 0 12px 12px">
                <StatusTitle>Server status</StatusTitle>
                <StatusLine $left={13} $ls={0.025}>
                  <svg width="15" height="20" viewBox="0 0 15 20"><path d="M1 11l2.500-1L6 16 12.500 1" fill="none" stroke="#007a00" strokeWidth="2.4" /></svg>
                  Connected
                </StatusLine>
                <StatusLine $left={36} $ls={0}>Load 0 %</StatusLine>
                <StatusAction><Button $w={150} $ls={0.01}>Save…</Button></StatusAction>
              </GroupBody>
            </Group>

            <Group $w={408}>
              <GroupTitle $green $ls={0.032}>Redaction Task</GroupTitle>
              <GroupBody $green $pad="10px 14px">
                <Step n="1" ls={0.01}>Set up tiers</Step>
                <Step n="2" ls={0.012}>Find speaker</Step>
                <Step n="3" ls={0.006}>Create redacted audio</Step>
              </GroupBody>
            </Group>

            <Group $w={254}>
              <GroupTitle $green>SAD</GroupTitle>
              <GroupBody $green>
                <ButtonRow><Button $focus>Run SAD</Button></ButtonRow>
                <ButtonRow><Button $ls={0.012}>Set threshold</Button></ButtonRow>
              </GroupBody>
            </Group>

            <Group $w={312}>
              <GroupTitle $green>QBE</GroupTitle>
              <GroupBody $green>
                <ButtonRow><Button $ls={-0.005}>Manage Keywords</Button></ButtonRow>
                <ButtonRow><Button $ls={0.01}>Score segments</Button></ButtonRow>
              </GroupBody>
            </Group>

            <Group $w={302}>
              <GroupTitle $green>ENH</GroupTitle>
              <GroupBody $green><ButtonRow><Button $ls={0.005}>Enhance</Button></ButtonRow></GroupBody>
            </Group>

            <Group $w={206}>
              <GroupTitle $green>DIA</GroupTitle>
              <GroupBody $green><ButtonRow><Button $ls={0.02}>Diarize</Button></ButtonRow></GroupBody>
            </Group>

            <Group $w={286}>
              <GroupTitle $green $ls={0.026}>Highlight</GroupTitle>
              <GroupBody $green $pad="8px 0 0 14px">
                <ButtonRow><Button $ls={0.022}>Highlight</Button></ButtonRow>
              </GroupBody>
            </Group>

            <ScrollHint>
              <svg width="30" height="30" viewBox="0 0 30 30"><path d="M1.500 3L26 15 1.500 27" fill="none" stroke="#666" strokeWidth="4.5" /></svg>
            </ScrollHint>
          </Toolbar>
          <CollapseHandle>
            <svg width="24" height="20" viewBox="0 0 24 20"><path d="M12 0l12 20H0z" fill="#c9c7cd" /></svg>
          </CollapseHandle>
        </ToolbarWrap>

        <Body>
          <Sidebar>
            <FileList>
              <FileItem>…n_150real_8k</FileItem>
              <FileItem $active>
                …nvOmM1_8k
                <svg width="25" height="34" viewBox="0 0 25 34">
                  <rect x="1" y="1" width="23" height="32" fill="#efefef" stroke="#444" strokeWidth="2" />
                  <path d="M0 16.500h25" stroke="#444" strokeWidth="2" />
                  <circle cx="12.5" cy="9" r="5" />
                </svg>
              </FileItem>
            </FileList>
          </Sidebar>

          <Workspace>
            <TabBar>
              <CloseTab>
                <svg width="20" height="20" viewBox="0 0 20 20"><path d="M1 1l18 18M19 1L1 19" stroke="#c9cdcd" strokeWidth="2" /></svg>
              </CloseTab>
              <Tab>2021SpaEngConvOmM1_8k–2022SpaEngConvOmM1_8k</Tab>
              <FilePath>/Users/e29031/Desktop/2021SpaEngConvOmM1_8k–2022SpaEngConvOmM1_8k.wav</FilePath>
            </TabBar>

            <AudioFrame>
              <AudioPane>
                <OverviewTrack>
                  <OverviewThumb><Grip /><Grip /><Grip /></OverviewThumb>
                </OverviewTrack>

                <Plots>
                  <PlotColumn>
                    <Ruler><TimeRuler /></Ruler>
                    <PlotRow $h={380}>
                      <SpectrumProfile />
                      <FrequencyAxis />
                      <Spectrogram />
                    </PlotRow>
                    <PlotRow $h={96}>
                      <LevelProfile />
                      <LevelAxis />
                      <Waveform />
                    </PlotRow>
                    <Bounds>
                      <BoundStart>1:31.27</BoundStart>
                      <Leader $gap={110} />
                      <Leader />
                      <BoundEnd>1:35.63</BoundEnd>
                    </Bounds>
                    <Selection>
                      <ZoomLabel>ZOOM</ZoomLabel>
                      <SelectionEdges />
                      <SelectionFoot>04.36</SelectionFoot>
                    </Selection>
                  </PlotColumn>

                  <Settings>
                    <Duration>4m 01.8s</Duration>
                    <SerifLabel $top={1} $ls={0.012}>Dynamic range</SerifLabel>
                    <RangeSlider>
                      <Rail $w={90} $start />
                      <Knob><svg width="10" height="14" viewBox="0 0 10 14"><path d="M1 0l8 7-8 7z" /></svg></Knob>
                      <Knob $range />
                      <Knob><svg width="10" height="14" viewBox="0 0 10 14"><path d="M9 0L1 7l8 7z" /></svg></Knob>
                      <Rail $w={46} $end />
                    </RangeSlider>
                    <SerifLabel $top={4} $ls={0.016}>Color scheme</SerifLabel>
                    <Combo>
                      <Swatch />
                      Specter
                      <ComboArrows>
                        <svg width="16" height="26" viewBox="0 0 16 26"><path d="M1.500 9L8 2.500 14.500 9M1.500 17L8 23.500 14.500 17" fill="none" stroke="#fff" strokeWidth="2.8" /></svg>
                      </ComboArrows>
                    </Combo>
                    <SerifLabel $top={11} $ls={0.012}>Optimize for</SerifLabel>
                    <Radio><Dot $on />Speech (WB)</Radio>
                    <Radio><Dot />Speech (NB)</Radio>
                    <Radio><Dot />Tones</Radio>
                    <LinkText $m="-2px 0 0 28px" $size={22}>more…</LinkText>
                    <Transport $left={26} $top={145}><PlaybackTools /></Transport>
                    <LinkText $m="8px 0 0 38px" $size={26}>Save selection</LinkText>
                  </Settings>
                </Plots>

                <Tier $h={52}>
                  <TierName $top={12} $ls={0.004}>Suggested</TierName>
                  <ProcessingLane>
                    <ProcessingText>Processing</ProcessingText>
                    <ProcessingDots />
                  </ProcessingLane>
                  <TierTail $top={12}><small>PLAY</small></TierTail>
                </Tier>
                <Tier $h={62}>
                  <TierName $top={17} $ls={0.014}><small>BLEEP</small> or keep</TierName>
                  <HatchLane>
                    <Bleep $left={108} $w={305}>BLEEP</Bleep>
                    <Bleep $left={428} $w={111}>BLEEP</Bleep>
                  </HatchLane>
                  <TierTail $top={16}><small>PLAY</small><span>16.6s</span></TierTail>
                </Tier>
                <Callout />
              </AudioPane>
            </AudioFrame>

            <DropZone>Drag an audio file here or use ⌘–o to browse</DropZone>
          </Workspace>
        </Body>
      </Window>
    </Desktop>
  );
}
